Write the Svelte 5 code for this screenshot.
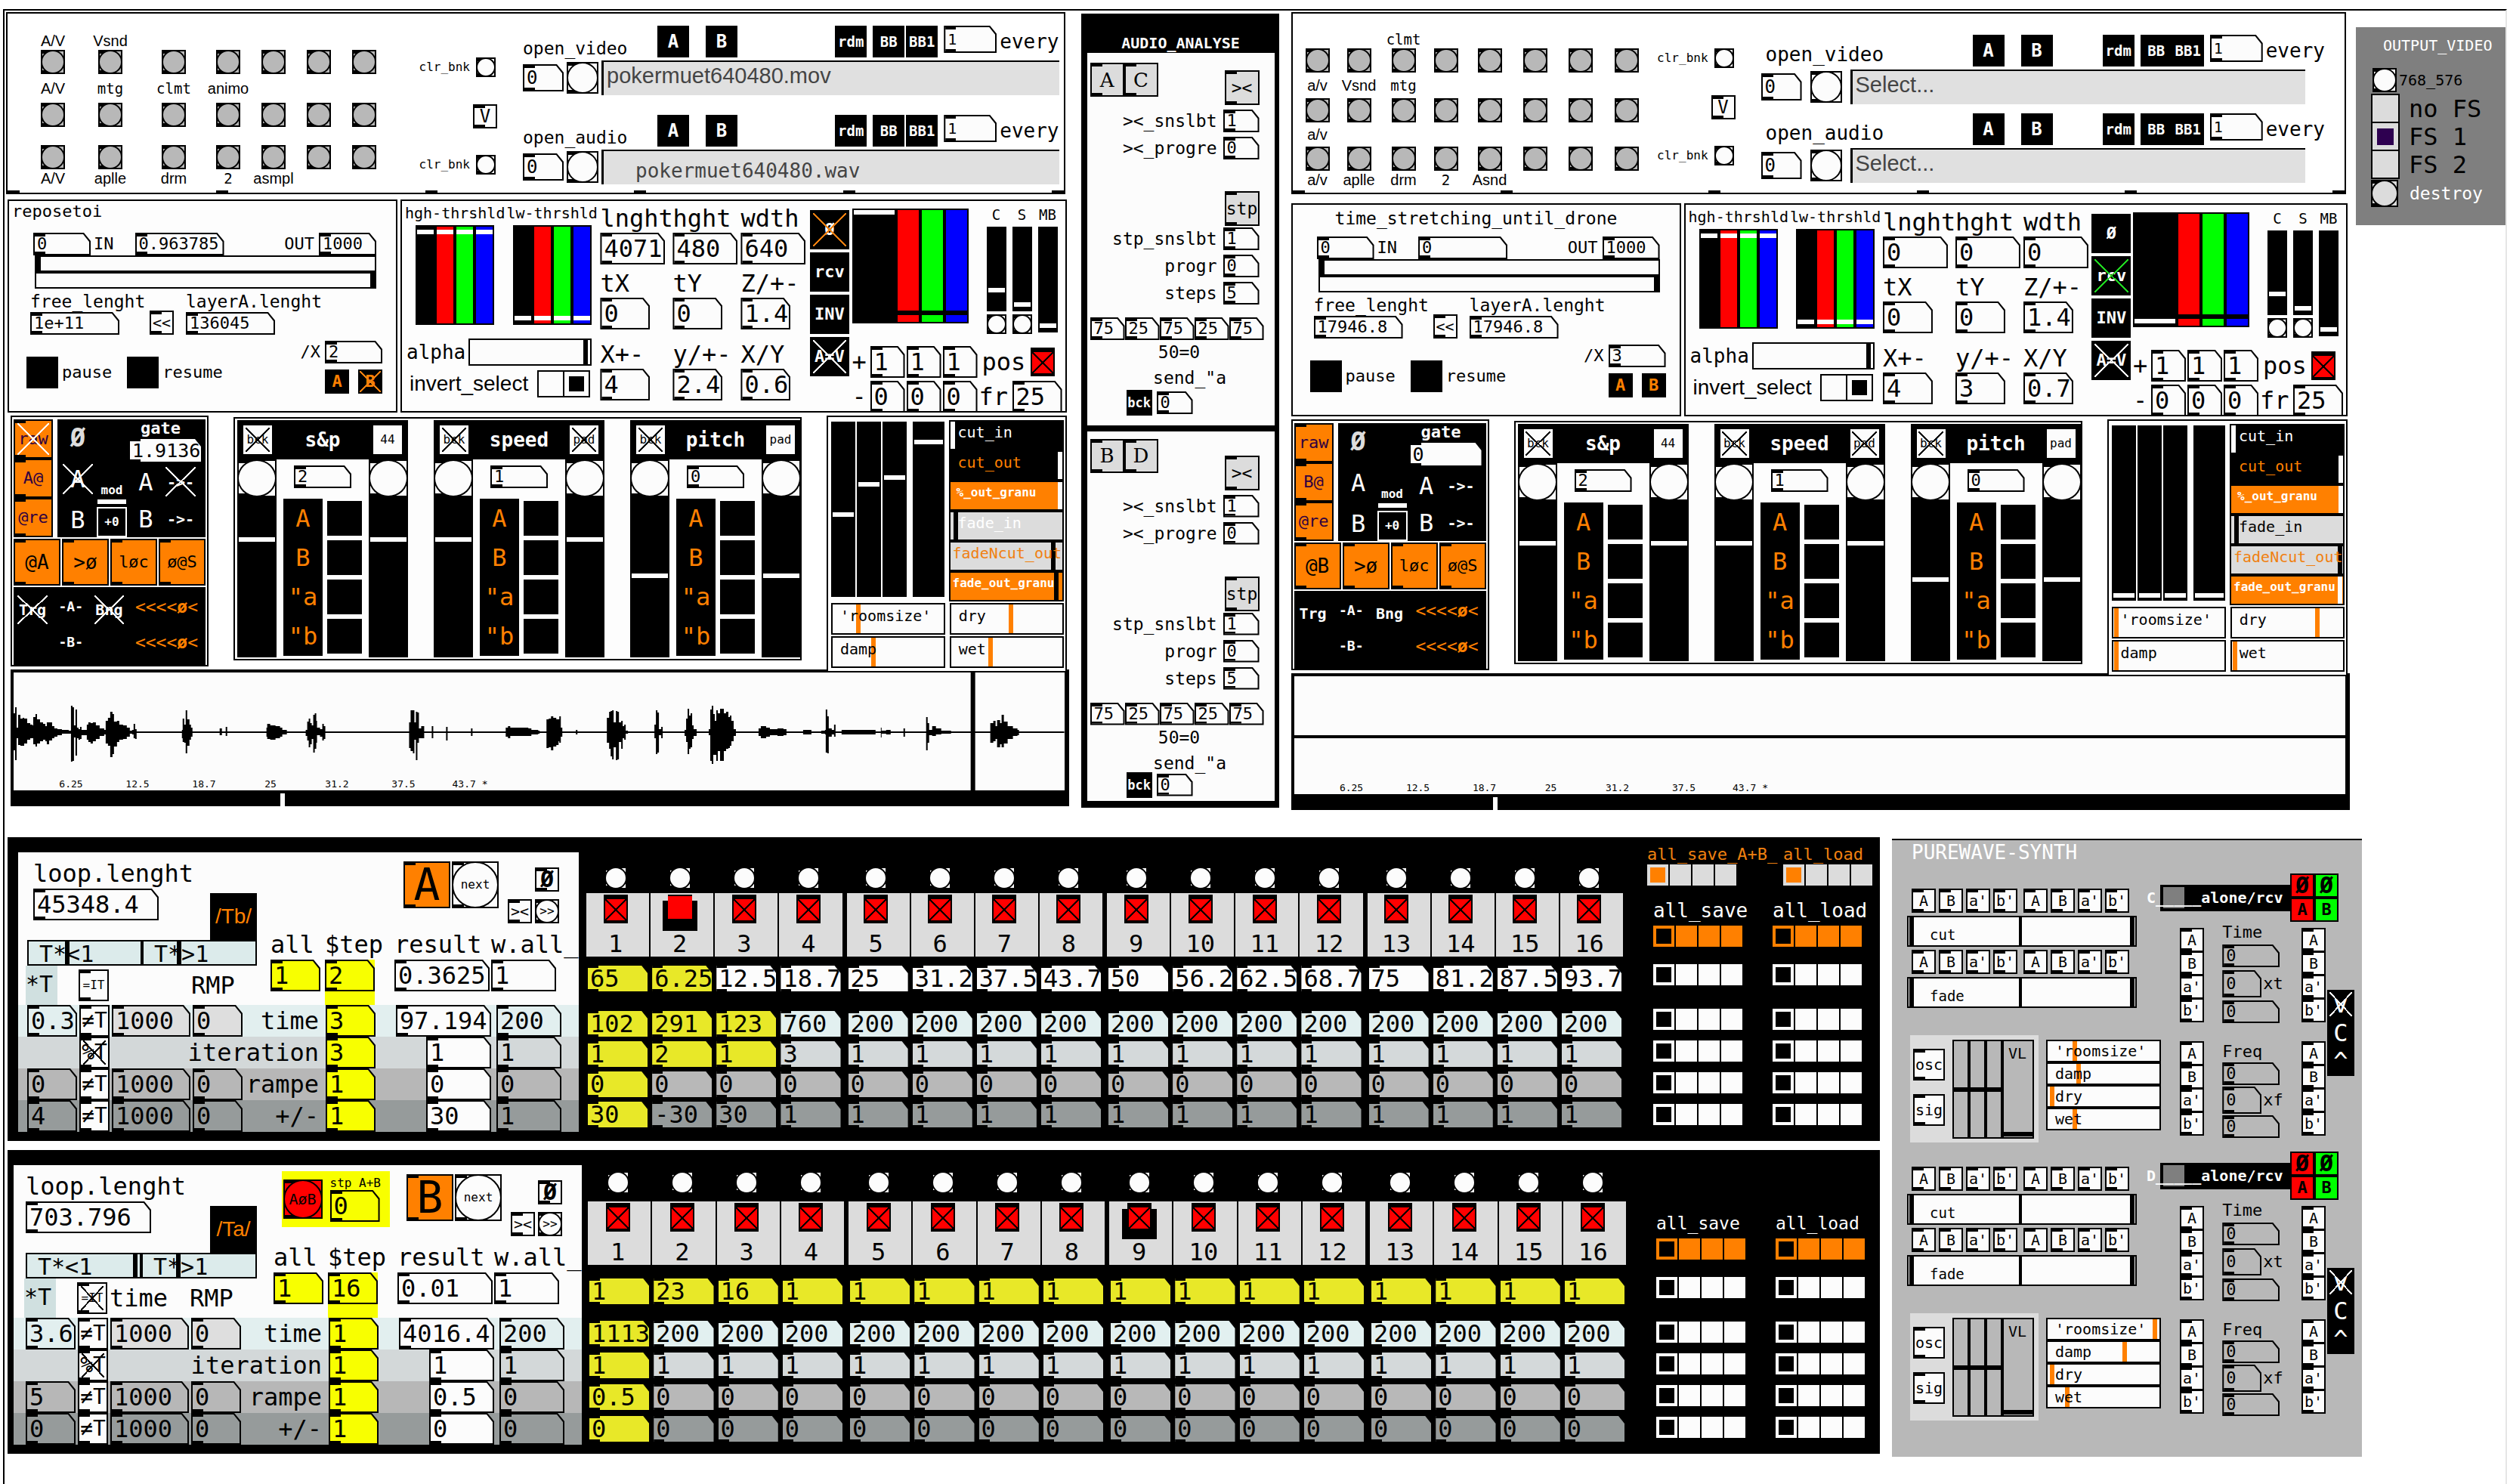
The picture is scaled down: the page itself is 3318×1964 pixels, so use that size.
<script>
  const mono = new Set(['mtg', 'clmt', '2']);
  const rgb = ['black', 'red', 'green', 'blue'];

  const decks = [
    {
      id: 'l',
      side: 'left',
      cells: [
        ['t', ['A/V', 'Vsnd', '', '', '', '', '']],
        ['b', 7],
        ['t', ['A/V', 'mtg', 'clmt', 'animo', '', '', '']],
        ['b', 7],
        ['t', ['', '', '', '', '', '', '']],
        ['b', 7],
        ['t', ['A/V', 'aplle', 'drm', '2', 'asmpl', '', '']]
      ],
      files: [
        { kind: 'open_video', name: 'pokermuet640480.mov', wav: false },
        { kind: 'open_audio', name: 'pokermuet640480.wav', wav: true }
      ],
      title: 'reposetoi',
      pos: '0.963785',
      free: '1e+11',
      layer: '136045',
      div: '2',
      bOff: true,
      nums: [
        [['lnght', '4071'], ['hght', '480'], ['wdth', '640']],
        [['tX', '0'], ['tY', '0'], ['Z/+-', '1.4']],
        [['X+-', '4'], ['y/+-', '2.4'], ['X/Y', '0.6']]
      ],
      modes: [['Ø', 'orange'], ['rcv', ''], ['INV', ''], ['A=V', 'white']],
      level: 100,
      orange: [['raw', true], ['A@', false], ['@re', false]],
      at: '@A',
      gate: '1.9136',
      crossed: true,
      faders: [47, 65, 69, 90],
      fadeIn: 'light',
      outs: [94, 97],
      verb: [['\'roomsize\'', 22], ['dry', 54], ['damp', 36], ['wet', 35]],
      play: 25.5
    },
    {
      id: 'r',
      side: 'right',
      cells: [
        ['t', ['', '', 'clmt', '', '', '', '', '']],
        ['b', 8],
        ['t', ['a/v', 'Vsnd', 'mtg', '', '', '', '', '']],
        ['b', 8],
        ['t', ['a/v', '', '', '', '', '', '', '']],
        ['b', 8],
        ['t', ['a/v', 'aplle', 'drm', '2', 'Asnd', '', '', '']]
      ],
      files: [
        { kind: 'open_video', name: 'Select...', wav: false },
        { kind: 'open_audio', name: 'Select...', wav: false }
      ],
      title: 'time_stretching_until_drone',
      pos: '0',
      free: '17946.8',
      layer: '17946.8',
      div: '3',
      bOff: false,
      nums: [
        [['lnght', '0'], ['hght', '0'], ['wdth', '0']],
        [['tX', '0'], ['tY', '0'], ['Z/+-', '1.4']],
        [['X+-', '4'], ['y/+-', '3'], ['X/Y', '0.7']]
      ],
      modes: [['Ø', ''], ['rcv', 'green'], ['INV', ''], ['A=V', 'white']],
      level: 2,
      orange: [['raw', false], ['B@', false], ['@re', false]],
      at: '@B',
      gate: '0',
      crossed: false,
      faders: [1, 1, 1, 1],
      fadeIn: 'dark',
      outs: [99, 99],
      verb: [['\'roomsize\'', 1], ['dry', 78], ['damp', 1], ['wet', 1]],
      play: 19
    }
  ];

  const voices = [
    { name: 's&p', v: '2', right: '44', rx: false, at: 75 },
    { name: 'speed', v: '1', right: 'pad', rx: true, at: 75 },
    { name: 'pitch', v: '0', right: 'pad', rx: false, at: 51 }
  ];
  const marks = ['6.25', '12.5', '18.7', '25', '31.2', '37.5', '43.7 *'];

  // x, height above the axis, height below the axis
  const wave = [[18,25,24],[20,33,37],[22,6,8],[24,23,17],[27,18,18],[30,19,18],[32,18,15],[36,12,10],[40,10,8],[43,9,8],[44,20,16],[47,24,19],[49,17,15],[53,13,12],[57,11,10],[60,8,12],[62,13,16],[65,13,11],[69,8,8],[72,5,6],[76,4,4],[82,3,2],[91,2,2],[94,35,39],[96,33,38],[98,9,7],[100,30,31],[102,6,8],[104,4,10],[106,7,9],[108,3,4],[112,3,4],[115,10,10],[117,13,13],[120,12,15],[123,13,12],[127,9,9],[132,5,5],[138,3,3],[140,15,15],[143,19,18],[146,27,33],[149,24,29],[151,14,19],[155,15,13],[158,10,10],[163,9,9],[168,6,6],[172,2,2],[175,3,3],[177,11,8],[179,4,9],[181,1,1],[240,1,1],[241,3,8],[242,18,13],[244,10,14],[246,29,28],[248,17,18],[251,10,10],[253,6,6],[255,1,1],[290,1,1],[291,5,4],[294,1,1],[298,1,1],[299,7,5],[301,1,1],[352,1,1],[353,6,6],[354,11,9],[358,9,10],[365,8,8],[371,6,6],[374,3,3],[380,1,1],[404,1,1],[405,3,5],[407,14,11],[409,18,20],[411,12,16],[413,9,9],[415,23,27],[417,25,22],[419,15,14],[420,6,4],[424,4,6],[427,11,11],[429,8,9],[431,1,1],[540,1,1],[542,13,21],[544,29,25],[547,29,28],[549,13,10],[551,27,37],[553,26,14],[555,5,8],[558,8,8],[562,1,1],[571,1,1],[572,8,8],[574,1,1],[589,1,1],[591,7,11],[593,1,1],[623,1,1],[624,5,5],[626,1,1],[669,1,1],[670,6,6],[673,8,8],[676,6,5],[690,6,5],[700,5,5],[704,3,3],[713,2,2],[715,1,1],[723,1,1],[724,17,21],[727,18,20],[730,21,24],[733,19,19],[737,17,17],[740,17,12],[741,21,14],[743,6,6],[745,1,1],[762,1,1],[763,3,3],[765,1,1],[803,1,1],[804,19,14],[807,27,22],[809,28,32],[811,29,36],[813,13,20],[816,28,37],[818,27,36],[820,13,13],[823,15,22],[825,8,8],[827,10,10],[829,2,2],[832,1,1],[866,1,1],[867,10,8],[869,29,29],[871,26,27],[873,4,4],[876,7,8],[878,1,1],[906,1,1],[907,3,5],[909,18,13],[911,31,29],[913,22,22],[915,25,20],[917,9,9],[919,4,5],[923,1,1],[938,1,1],[939,4,4],[941,30,38],[943,35,42],[945,24,30],[947,15,30],[949,29,38],[951,25,25],[954,31,38],[957,31,38],[959,25,25],[962,27,22],[965,20,21],[967,22,18],[969,15,12],[972,4,5],[975,1,1],[1002,1,1],[1005,5,5],[1008,8,8],[1015,6,6],[1020,4,4],[1030,5,5],[1038,4,4],[1042,1,1],[1060,1,1],[1064,3,3],[1070,3,3],[1075,1,1],[1088,2,2],[1093,3,3],[1094,30,27],[1096,21,28],[1098,5,6],[1102,3,3],[1105,10,6],[1107,1,1],[1115,3,3],[1130,3,3],[1155,3,3],[1160,1,1],[1167,6,7],[1168,2,2],[1174,3,3],[1180,1,1],[1196,1,1],[1197,5,6],[1199,1,1],[1225,1,1],[1227,20,24],[1229,12,14],[1231,3,4],[1235,8,5],[1240,5,3],[1247,2,2],[1260,1,1],[1311,1,1],[1312,12,14],[1316,15,12],[1319,8,9],[1321,16,20],[1325,12,16],[1327,23,20],[1330,14,15],[1335,8,9],[1342,5,5],[1348,3,4],[1350,1,1],[1408,1,1]];
  const steps = (side) =>
    wave.slice(0, -1).flatMap((w, i) => [
      [w[0] - 18, 79 + side * w[side < 0 ? 1 : 2]],
      [wave[i + 1][0] - 18, 79 + side * w[side < 0 ? 1 : 2]]
    ]);
  const wavePoints = [...steps(-1), ...steps(1).reverse()].map((p) => p.join(',')).join(' ');

  const analysis = [
    { id: 'a', pair: ['A', 'C'] },
    { id: 'b', pair: ['B', 'D'] }
  ];

  const fill = (head, v) => [...head, ...Array(16 - head.length).fill(v)];
  const seqs = [
    {
      id: 'A',
      len: '45348.4',
      tag: '/Tb/',
      t: [34, 31],
      itOff: false,
      step: '2',
      result: '0.3625',
      rows: [
        ['time', '0.3', '≠T', '1000', '0', '3', '97.194', '200'],
        ['iteration', '', '%T', '', '', '3', '1', '1'],
        ['rampe', '0', '≠T', '1000', '0', '1', '0', '0'],
        ['+/-', '4', '≠T', '1000', '0', '1', '30', '1']
      ],
      pressed: 2,
      steps: [
        ['65', '6.25', '12.5', '18.7', '25', '31.2', '37.5', '43.7', '50', '56.2', '62.5', '68.7', '75', '81.2', '87.5', '93.7'],
        fill(['102', '291', '123', '760'], '200'),
        fill(['1', '2', '1', '3'], '1'),
        fill([], '0'),
        fill(['30', '-30', '30'], '1')
      ],
      lit: [2, 3, 3, 1, 1]
    },
    {
      id: 'B',
      len: '703.796',
      tag: '/Ta/',
      t: [98, 31],
      itOff: true,
      step: '16',
      result: '0.01',
      rows: [
        ['time', '3.6', '≠T', '1000', '0', '1', '4016.4', '200'],
        ['iteration', '', '%T', '', '', '1', '1', '1'],
        ['rampe', '5', '≠T', '1000', '0', '1', '0.5', '0'],
        ['+/-', '0', '≠T', '1000', '0', '1', '0', '0']
      ],
      pressed: 9,
      steps: [
        fill(['1', '23', '16'], '1'),
        fill(['1113'], '200'),
        fill([], '1'),
        fill(['0.5'], '0'),
        fill([], '0')
      ],
      lit: [16, 1, 1, 1, 1]
    }
  ];
  const rowNames = ['position', 'time', 'iteration', 'rampe', 'sign'];

  const units = [
    { id: 'C', verb: [['\'roomsize\'', 23], ['damp', 27], ['dry', 2], ['wet', 23]] },
    { id: 'D', verb: [['\'roomsize\'', 98], ['damp', 70], ['dry', 2], ['wet', 16]] }
  ];
  const keys = ['A', 'B', "a'", "b'"];
</script>

{#snippet num(v, cls, name)}
  <span class="num {cls}"><input value={v} aria-label={name} /></span>
{/snippet}

{#snippet vs(v, cls, name)}
  <input class="vs {cls}" type="range" min="0" max="100" value={v} aria-label={name} />
{/snippet}

{#snippet hs(v, cls, name)}
  <input class="hs {cls}" type="range" min="0" max="100" step="any" value={v} aria-label={name} />
{/snippet}

{#snippet tog(text, cls)}
  <button class="tog {cls}"><span>{text}</span></button>
{/snippet}

{#snippet radios(name, cls)}
  <span class="rad {cls}" role="radiogroup" aria-label={name}>
    {#each [0, 1, 2, 3] as n}
      <input type="radio" {name} checked={n === 0} aria-label="{name} {n + 1}" />
    {/each}
  </span>
{/snippet}

{#snippet deck(d)}
  <section class="deck {d.side}">
    <div class="bank">
      <div class="pads">
        {#each d.cells as [type, items]}
          {#if type === 't'}
            {#each items as t}<span class="cap" class:mono={mono.has(t)}>{t}</span>{/each}
          {:else}
            {#each Array(items) as _, i}<button class="bang grey" aria-label="bank {i + 1}"></button>{/each}
          {/if}
        {/each}
      </div>
      <div class="clear">
        <label>clr_bnk <button class="bang tiny" aria-label="clear bank"></button></label>
        {@render tog('V', 'vbox')}
        <label>clr_bnk <button class="bang tiny" aria-label="clear bank"></button></label>
      </div>
      <div class="files">
        {#each d.files as f}
          <div class="file">
            <div class="filetop">
              <span class="kind">{f.kind}</span>
              <span class="ab">{@render tog('A', 'blk')}{@render tog('B', 'blk')}</span>
              <span class="rnd">
                {@render tog('rdm', 'blk small')}
                <span class="bbs">{@render tog('BB', 'blk small')}{@render tog('BB1', 'blk small')}</span>
                {@render num('1', 'n70 h36', f.kind + ' every')}
              </span>
              <span class="every">every</span>
            </div>
            <div class="filerow">
              {@render num('0', 'n54 h36', f.kind + ' index')}
              <button class="bang big" aria-label={f.kind}></button>
              <input class="path" class:wav={f.wav} value={f.name} aria-label={f.kind + ' file'} />
            </div>
          </div>
        {/each}
      </div>
    </div>

    <div class="row2">
      <div class="stretch box">
        <h2>{d.title}</h2>
        <div class="inout">
          {@render num('0', 'n76 h30', 'in')}<span class="in">IN</span>
          {@render num(d.pos, 'n118 h30', 'position')}<span class="out">OUT</span>
          {@render num('1000', 'n76 h30', 'out')}
        </div>
        <div class="range">
          {@render hs(0, 'k', 'range start')}
          {@render hs(100, 'k', 'range end')}
        </div>
        <div class="lens">
          <div><span>free_lenght</span>{@render num(d.free, 'n118 h30', 'free_lenght')}</div>
          {@render tog('<<', 'sq')}
          <div><span>layerA.lenght</span>{@render num(d.layer, 'n118 h30', 'layerA.lenght')}</div>
        </div>
        <div class="foot">
          <label class="lb"><button class="solid" aria-label="pause"></button>pause</label>
          <label class="lb"><button class="solid" aria-label="resume"></button>resume</label>
          <div class="divx">
            <label>/X {@render num(d.div, 'n76 h30', 'divide')}</label>
            <span>{@render tog('A', 'blk or')}{@render tog('B', d.bOff ? 'blk or x xo' : 'blk or')}</span>
          </div>
        </div>
      </div>

      <div class="color box">
        <div class="thr">
          <div class="thrtop">
            <div><span>hgh-thrshld</span><div class="quad">{#each rgb as c}{@render vs(97, 'w ' + c, 'high ' + c)}{/each}</div></div>
            <div><span>lw-thrshld</span><div class="quad">{#each rgb as c}{@render vs(3, 'w ' + c, 'low ' + c)}{/each}</div></div>
          </div>
          <label class="alpha">alpha{@render hs(98, 'k', 'alpha')}</label>
          <div class="inv">invert_select
            <span class="rad two"><input type="radio" name="inv-{d.id}" aria-label="invert off" /><input type="radio" name="inv-{d.id}" checked aria-label="invert on" /></span>
          </div>
        </div>
        <div class="geo">
          {#each d.nums as r, i}
            {#each r as [l, v]}
              <label><span>{l}</span>{@render num(v, i ? 'n66 h42' : 'n86 h42', l)}</label>
            {/each}
          {/each}
        </div>
        <div class="modes">
          {#each d.modes as [t, x]}{@render tog(t, 'mode' + (x ? ' x x' + x : ''))}{/each}
        </div>
        <div class="mix">
          <div class="mixtop">
            <div class="levels">
              {@render vs(d.level, 'w black wide', 'level')}
              {#each rgb.slice(1) as c}{@render vs(6, 'kk ' + c, 'level ' + c)}{/each}
            </div>
            <div class="csm">
              <div><span>C</span>{@render vs(23, 'w black', 'C')}<button class="bang tiny" aria-label="reset C"></button></div>
              <div><span>S</span>{@render vs(4, 'w black', 'S')}<button class="bang tiny" aria-label="reset S"></button></div>
              <div><span>MB</span>{@render vs(3, 'w black tall', 'MB')}</div>
            </div>
          </div>
          <div class="pn"><b>+</b>{#each [1, 2, 3] as n}{@render num('1', 'n46 h42', 'plus ' + n)}{/each}<em class="pos">pos</em><input class="rx" type="checkbox" checked aria-label="pos" /></div>
          <div class="pn"><b>-</b>{#each [1, 2, 3] as n}{@render num('0', 'n46 h42', 'minus ' + n)}{/each}<em class="fr">fr</em>{@render num('25', 'n66 h42', 'frame rate')}</div>
        </div>
      </div>
    </div>

    <div class="row3">
      <div class="gate box">
        <div class="g1">
          <div class="gcol">{#each d.orange as [t, x]}{@render tog(t, x ? 'og x xwhite' : 'og')}{/each}</div>
          <div class="gblk">
            <div class="gab">
              <b class="zero">Ø</b>
              {@render tog('A', d.crossed ? 'bare x xwhite' : 'bare')}
              {@render tog('B', 'bare')}
            </div>
            <div class="gmod"><span>mod</span><i></i>{@render tog('+0', 'plus')}</div>
            <div class="gright">
              <span class="gl">gate</span>
              {@render num(d.gate, 'n98 h34', 'gate')}
              <div>{@render tog('A', 'bare')}{@render tog('->-', d.crossed ? 'bare sm x xwhite' : 'bare sm')}</div>
              <div>{@render tog('B', 'bare')}{@render tog('->-', 'bare sm')}</div>
            </div>
          </div>
        </div>
        <div class="g2">
          {@render tog(d.at, 'om')}{@render tog('>ø', 'om')}{@render tog('løc', 'om s')}{@render tog('ø@S', 'om s')}
        </div>
        <div class="g3">
          {@render tog('Trg', d.crossed ? 'bare t x xwhite' : 'bare t')}
          <div><span>-A-</span><span>-B-</span></div>
          {@render tog('Bng', d.crossed ? 'bare t x xwhite' : 'bare t')}
          <div class="arrows"><span>&lt;&lt;&lt;&lt;<b>ø</b>&lt;</span><span>&lt;&lt;&lt;&lt;<b>ø</b>&lt;</span></div>
        </div>
      </div>

      <div class="voices box">
        {#each voices as v}
          <div class="voice">
            <header>{@render tog('bck', 'pad x')}<strong>{v.name}</strong>{@render tog(v.right, v.rx ? 'pad x' : 'pad')}</header>
            <div class="vbody">
              <div class="side"><button class="bang" aria-label="{v.name} left"></button>{@render vs(v.at, 'w black', v.name + ' left')}</div>
              <div class="mid">
                {@render num(v.v, 'n76 h30', v.name)}
                <div class="layers">
                  <div class="names">{#each ['A', 'B', '"a', '"b'] as n}<button>{n}</button>{/each}</div>
                  <div class="sqs">{#each [1, 2, 3, 4] as n}<button aria-label="{v.name} layer {n}"></button>{/each}</div>
                </div>
              </div>
              <div class="side"><button class="bang" aria-label="{v.name} right"></button>{@render vs(v.at, 'w black', v.name + ' right')}</div>
            </div>
          </div>
        {/each}
      </div>

      <div class="fx box">
        <div class="fxtop">
          <div class="strips">{#each d.faders as f, i}{@render vs(f, 'w black', 'strip ' + (i + 1))}{/each}</div>
          <div class="cuts">
            <label class="c1"><span>cut_in</span>{@render hs(0, 'w', 'cut_in')}</label>
            <label class="c2"><span>cut_out</span>{@render hs(100, 'w', 'cut_out')}</label>
            <label class="c3"><span>%_out_granu</span>{@render hs(100, 'w', '%_out_granu')}</label>
            <label class="c4 {d.fadeIn}"><span>fade_in</span>{@render hs(3, 'k', 'fade_in')}</label>
            <label class="c5"><span>fadeNcut_out</span>{@render hs(d.outs[0], 'k', 'fadeNcut_out')}</label>
            <label class="c6"><span>fade_out_granu</span>{@render hs(d.outs[1], d.crossed ? 'k' : 'w', 'fade_out_granu')}</label>
          </div>
        </div>
        <div class="verb">
          {#each d.verb as [l, v]}<label class="vb"><span>{l}</span>{@render hs(v, 'o', l)}</label>{/each}
        </div>
      </div>
    </div>

    <div class="wave">
      <div class="scope">
        <svg viewBox="0 0 1392 156" preserveAspectRatio="none" aria-hidden="true">
          {#if d.side === 'left'}
            <polygon points={wavePoints} />
            <rect x="0" y="78" width="1392" height="2" />
            <rect x="1268" y="0" width="6" height="156" />
          {:else}
            <rect x="0" y="78" width="1392" height="4" />
          {/if}
        </svg>
        <div class="marks">{#each marks as m}<span>{m}</span>{/each}</div>
      </div>
      {@render hs(d.play, 'w', 'play position')}
    </div>
  </section>
{/snippet}

<main>
  <div class="top">
    {@render deck(decks[0])}

    <section class="analyse">
      <h2>AUDIO_ANALYSE</h2>
      {#each analysis as a}
        <div class="an {a.id}">
          <div class="an1"><span>{#each a.pair as p}{@render tog(p, 'ser')}{/each}</span>{@render tog('><', 'gb')}</div>
          <label>&gt;&lt;_snslbt {@render num('1', 'n48 h30', 'snslbt')}</label>
          <label>&gt;&lt;_progre {@render num('0', 'n48 h30', 'progre')}</label>
          <div class="an2">{@render tog('stp', 'gb')}</div>
          <label>stp_snslbt {@render num('1', 'n48 h30', 'stp_snslbt')}</label>
          <label>progr {@render num('0', 'n48 h30', 'progr')}</label>
          <label>steps {@render num('5', 'n48 h30', 'steps')}</label>
          <div class="five">{#each [75, 25, 75, 25, 75] as v, i}{@render num(v, 'n46 h30', 'level ' + (i + 1))}{/each}</div>
          <p>50=0</p>
          <p class="send">send_"a</p>
          <div class="bck">{@render tog('bck', 'blk mini')}{@render num('0', 'n48 h30', 'send')}</div>
        </div>
      {/each}
    </section>

    <div class="rightside">
      {@render deck(decks[1])}
      <aside>
        <h2>OUTPUT_VIDEO</h2>
        <label class="size"><button class="bang" aria-label="768_576"></button>768_576</label>
        <div class="fs">
          {#each ['no FS', 'FS 1', 'FS 2'] as f, i}
            <label><input type="radio" name="fs" checked={i === 1} />{f}</label>
          {/each}
        </div>
        <label class="destroy"><button class="bang" aria-label="destroy"></button>destroy</label>
      </aside>
    </div>
  </div>

  <div class="bottom">
    <div class="seqs">
      {#each seqs as s}
        <section class="seq s{s.id}">
          <div class="ctl">
            <div class="ctop">
              <div class="cl">
                <div class="lenrow">
                  <label><span>loop.lenght</span>{@render num(s.len, 'n166 h42', 'loop.lenght')}</label>
                  <button class="tag">{s.tag}</button>
                </div>
                <div class="ts">
                  <label><span>T*&lt;1</span>{@render hs(s.t[0], 'k', 'T*<1')}</label>
                  <label><span>T*&gt;1</span>{@render hs(s.t[1], 'k', 'T*>1')}</label>
                </div>
                <div class="heads">
                  <span class="star">*T</span>
                  {@render tog('=IT', s.itOff ? 'it x' : 'it')}
                  <span>{s.id === 'B' ? 'time' : ''}</span>
                  <span>RMP</span>
                </div>
              </div>
              <div class="cr">
                <div class="acts">
                  {#if s.id === 'B'}
                    <div class="stp"><button class="bang red"><span>AøB</span></button><label><span class="sl">stp A+B</span>{@render num('0', 'n66 h42 yel', 'stp A+B')}</label></div>
                  {/if}
                  <button class="letter">{s.id}</button>
                  <button class="bang next"><span>next</span></button>
                  <div class="nav">
                    {@render tog('Ø', 'nz')}
                    <span>{@render tog('><', 'nx')}<button class="bang nb"><span>&gt;&gt;</span></button></span>
                  </div>
                </div>
                <div class="cg">
                  <span>all</span><span>$tep</span><span>result</span><span>w.all_</span>
                  <span class="yb">{@render num('1', 'n66 h42 yel', 'all')}</span>
                  <span class="yb full">{@render num(s.step, 'n66 h42 yel', '$tep')}</span>
                  {@render num(s.result, 'n126 h42', 'result')}
                  {@render num('1', 'n86 h42', 'w.all')}
                </div>
              </div>
            </div>
            {#each s.rows as r, i}
              <div class="cline l{i}">
                {#if r[1]}{@render num(r[1], 'n66 h42 own', r[0] + ' factor')}{:else}<span></span>{/if}
                {@render tog(r[2], i === 1 ? 'ne x' : 'ne')}
                {#if r[3]}{@render num(r[3], 'n104 h42 gry', r[0] + ' ms')}{@render num(r[4], 'n66 h42 gry', r[0] + ' ramp')}{:else}<span></span><span></span>{/if}
                <span class="rn">{r[0]}</span>
                {@render num(r[5], 'n66 h42 yel', r[0] + ' $tep')}
                <span class="end">{@render num(r[6], i ? 'n86 h42' : 'n126 h42', r[0] + ' result')}</span>
                <span class="end">{@render num(r[7], 'n86 h42 own', r[0] + ' w.all')}</span>
              </div>
            {/each}
          </div>

          <div class="steps">
            {#each [0, 4, 8, 12] as g}
              <div class="grp">
                {#each [0, 1, 2, 3].map((k) => g + k) as n}
                  <div class="step">
                    <button class="bang sb" aria-label="go to step {n + 1}"></button>
                    <label class="sh"><span class="tw" class:pressed={s.pressed === n + 1}><input class="rx" class:flat={n === 1 && s.pressed === 2} type="checkbox" checked aria-label="step {n + 1}" /></span>{n + 1}</label>
                    {#each s.steps as row, r}
                      {@render num(row[n], 'cell r' + r + (n < s.lit[r] ? ' lit' : ''), rowNames[r] + ' ' + (n + 1))}
                    {/each}
                  </div>
                {/each}
              </div>
            {/each}
          </div>

          <div class="presets">
            {#if s.id === 'A'}
              <div class="ptop">
                <div><span>all_save_A+B_</span>{@render radios('all_save_A+B', 'lt')}</div>
                <div><span>all_load</span>{@render radios('all_load_A+B', 'lt')}</div>
              </div>
            {/if}
            <div class="pcols">
              {#each ['all_save', 'all_load'] as p}
                <div class="pcol">
                  <h3>{p}</h3>
                  {@render radios(p + '_' + s.id, 'or')}
                  {#each rowNames as r}{@render radios(p + '_' + s.id + '_' + r, 'wh')}{/each}
                </div>
              {/each}
            </div>
          </div>
        </section>
      {/each}
    </div>

    <section class="synth">
      <h2>PUREWAVE-SYNTH</h2>
      {#each units as u}
        <div class="unit">
          <div class="uc">
            {#each ['cut', 'fade'] as c}
              <div class="keys">
                {#each [0, 1] as h}<span>{#each keys as k}{@render tog(k, 'key')}{/each}</span>{/each}
              </div>
              <div class="cf {c}">
                <label><span>{c}</span>{@render hs(1, 'k', c + ' in')}</label>
                {@render hs(99, 'k', c + ' out')}
              </div>
            {/each}
          </div>
          <div class="alone">
            <span>{u.id}</span>
            <div><i></i><b>_____alone/rcv</b></div>
            <span class="rg">{@render tog('Ø', 'r z')}{@render tog('Ø', 'g z')}{@render tog('A', 'r')}{@render tog('B', 'g')}</span>
          </div>
          {#each [['Time', 'xt'], ['Freq', 'xf']] as [t, x]}
            <div class="tf {t}">
              <div class="kc">{#each keys as k}{@render tog(k, 'key')}{/each}</div>
              <div class="tn">
                <span>{t}</span>
                {@render num('0', 'n76 h30 gr', t)}
                <label>{@render num('0', 'n52 h36 gr', x)}{x}</label>
                {@render num('0', 'n76 h30 gr', t + ' fine')}
              </div>
              <div class="kc">{#each keys as k}{@render tog(k, 'key')}{/each}</div>
            </div>
          {/each}
          <div class="osc">
            <div class="oscbox">
              <div class="obs">{@render tog('osc', 'ob')}{@render tog('sig', 'ob')}</div>
              <div class="ofad">
                {#each [1, 2, 3] as n}{@render vs(50, 'k2', 'osc ' + n)}{/each}
                <label><span>VL</span>{@render vs(1, 'k2', 'VL')}</label>
              </div>
            </div>
            <div class="verb4">{#each u.verb as [l, v]}<label class="vb"><span>{l}</span>{@render hs(v, 'o', l)}</label>{/each}</div>
          </div>
          <div class="vc">{@render tog('v', 'bare x xwhite')}{@render tog('C', 'bare')}{@render tog('^', 'bare')}</div>
        </div>
      {/each}
    </section>
  </div>
</main>

<style>
  :global(body) { background: #fff; }
  main {
    --tick: linear-gradient(#000, #000) 0 0 / 14px 3px no-repeat, linear-gradient(#000, #000) 0 100% / 14px 3px no-repeat;
    font: 20px/24px "DejaVu Sans Mono", monospace;
    color: #000;
    margin: 12px 0 0 4px;
    min-height: calc(100vh - 12px);
    box-sizing: border-box;
    border-left: 2px solid #000;
    border-top: 2px solid #000;
    border-right: 2px solid #e6e6e6;
    padding: 2px 0 0 2px;
    white-space: nowrap;
  }
  main * { box-sizing: border-box; }
  h2, h3, p { margin: 0; font-size: inherit; font-weight: inherit; }
  em, strong { font-style: normal; font-weight: normal; }
  button, input { font: inherit; color: inherit; border-radius: 0; margin: 0; min-width: 0; }
  button { padding: 0; }
  .box { border: 2px solid #000; background: #fdfdfd; }

  /* number box */
  .num {
    display: inline-flex;
    flex: none;
    background: #000;
    padding: 2px;
    clip-path: polygon(0 0, calc(100% - 9px) 0, 100% 11px, 100% 100%, 0 100%);
  }
  .num input {
    width: 100%;
    border: 0;
    padding: 0 0 0 3px;
    background: var(--tick), var(--bg, #fcfcfc);
    clip-path: polygon(0 0, calc(100% - 8px) 0, 100% 10px, 100% 100%, 0 100%);
  }
  .n46 { width: 46px; } .n48 { width: 48px; } .n52 { width: 52px; } .n54 { width: 54px; }
  .n66 { width: 66px; } .n70 { width: 70px; } .n76 { width: 76px; } .n86 { width: 86px; }
  .n98 { width: 98px; } .n104 { width: 104px; } .n118 { width: 118px; } .n126 { width: 126px; } .n166 { width: 166px; }
  .h30 { height: 30px; font-size: 22px; } .h34 { height: 34px; } .h36 { height: 36px; } .h42 { height: 42px; }
  .yel { --bg: #f8ff00; }
  .gr { --bg: #b8b8b8; }

  /* bang */
  .bang {
    width: 32px;
    height: 32px;
    flex: none;
    border: 2px solid #000;
    background: var(--tick), var(--bb, #fcfcfc);
    display: grid;
    place-items: center;
  }
  .bang::before { content: ''; grid-area: 1 / 1; width: 100%; height: 100%; border: 2px solid #000; border-radius: 50%; background: var(--bb, #fcfcfc); }
  .bang span { grid-area: 1 / 1; }
  .grey { --bb: #b8b8b8; }
  .bang.tiny { width: 26px; height: 26px; }
  .bang.big { width: 42px; height: 42px; }

  /* labelled toggle */
  .tog { display: grid; place-items: center; flex: none; border: 2px solid #000; background: var(--tick), #fcfcfc; }
  .tog span { grid-area: 1 / 1; }
  .x { --xc: #000; }
  .x::after {
    content: '';
    grid-area: 1 / 1;
    width: 86%;
    height: 86%;
    background:
      linear-gradient(to top right, transparent calc(50% - 1px), var(--xc) calc(50% - 1px) calc(50% + 1px), transparent calc(50% + 1px)),
      linear-gradient(to bottom right, transparent calc(50% - 1px), var(--xc) calc(50% - 1px) calc(50% + 1px), transparent calc(50% + 1px));
  }
  .xorange, .xo { --xc: #f08010; }
  .xwhite { --xc: #fff; }
  .xgreen { --xc: #20d820; }
  .blk { width: 42px; height: 42px; border: 0; background: #000; color: #fff; font-weight: bold; font-size: 24px; }
  .blk.small { font-size: 19px; }
  .blk.or { width: 32px; height: 32px; color: #ff8000; font-size: 22px; }
  .blk.mini { width: 34px; height: 34px; font-size: 17px; }
  .sq { width: 32px; height: 32px; }

  /* sliders */
  .vs, .hs { appearance: none; display: block; padding: 0; background: var(--tr, #fcfcfc); border: 2px solid #000; --th: #000; }
  .vs { writing-mode: vertical-lr; direction: rtl; width: 26px; height: 100%; }
  .hs { width: 100%; height: 100%; }
  .vs::-webkit-slider-runnable-track, .hs::-webkit-slider-runnable-track { width: 100%; height: 100%; }
  .vs::-webkit-slider-thumb { appearance: none; width: 100%; height: 6px; background: var(--th); border: 0; }
  .hs::-webkit-slider-thumb { appearance: none; width: 6px; height: 100%; background: var(--th); border: 0; }
  .w { --th: #fdfdfd; }
  .k, .kk, .k2 { --th: #000; }
  .o { --th: #ff8000; }
  .black { --tr: #000; } .red { --tr: #f00; } .green { --tr: #0f0; } .blue { --tr: #00f; }

  /* radio strips */
  .rad { display: flex; }
  .rad input { appearance: none; width: 28px; height: 28px; background: var(--c); }
  .rad.lt { --c: #dcdcdc; --m: #ff8000; gap: 2px; }
  .rad.or { --c: #ff8000; --m: #000; gap: 2px; }
  .rad.wh { --c: #fcfcfc; --m: #000; gap: 2px; }
  .rad input:checked { background: linear-gradient(var(--m), var(--m)) center / 20px 20px no-repeat, var(--c); }
  .rad.two { --c: #fcfcfc; --m: #000; width: 70px; border: 2px solid #000; background: #000; gap: 2px; height: 36px; }
  .rad.two input { flex: 1; height: 32px; }

  .top { display: grid; grid-template-columns: minmax(0, 1407fr) 262px minmax(0, 1608fr); gap: 16px; }
  .rightside { display: flex; gap: 8px; }
  .deck { flex: 1; min-width: 0; }

  /* banks */
  .bank {
    display: flex;
    margin-right: 5px;
    height: 241px;
    border: 2px solid #000;
    padding-right: 6px;
    background: repeating-linear-gradient(90deg, #000 0 16px, transparent 16px calc((100% - 16px) / 5)) 0 100% / 100% 3px no-repeat, #fff;
  }
  .pads {
    display: grid;
    grid-template: 24px 32px 38px 32px 24px 32px 24px / 80px 72px 96px 48px 72px 48px 72px;
    padding: 24px 0 0 20px;
    justify-items: center;
    align-items: center;
  }
  .right .pads { grid-template: 24px 32px 34px 32px 32px 32px 24px / 54px 56px 62px 50px 66px 54px 66px 56px; padding: 22px 0 0 6px; }
  .cap { font: 20px/24px "Liberation Sans", sans-serif; }
  .cap.mono { font: 19px/24px "DejaVu Sans Mono", monospace; }
  .clear { width: 108px; margin-left: 32px; padding: 58px 0 24px; display: flex; flex-direction: column; justify-content: space-between; align-items: flex-end; font-size: 16px; }
  .right .clear { margin-left: 8px; padding: 46px 0 36px; }
  .clear label { display: flex; align-items: center; gap: 8px; padding-right: 2px; }
  .vbox { width: 32px; height: 32px; font-size: 24px; }
  .files { flex: 1; margin-left: 34px; padding-top: 16px; display: flex; flex-direction: column; gap: 26px; }
  .right .files { padding: 28px 46px 0 0; gap: 12px; }
  .filetop { display: flex; height: 46px; align-items: flex-start; }
  .kind { font-size: 23px; width: 178px; padding-top: 18px; }
  .right .kind { font-size: 26px; width: 280px; padding-left: 6px; padding-top: 14px; }
  .ab { display: flex; gap: 22px; margin-right: auto; }
  .rnd { display: flex; gap: 8px; }
  .bbs { display: flex; gap: 2px; }
  .right .bbs { gap: 0; }
  .every { font-size: 26px; line-height: 42px; padding-left: 4px; }
  .right .filetop { margin-right: -26px; }
  .filerow { display: flex; align-items: center; gap: 4px; height: 46px; font-size: 24px; }
  .right .filerow { gap: 11px; }
  .path { flex: 1; align-self: stretch; border: 0; border-left: 3px solid #000; border-top: 2px solid #000; background: #e0e0e0; color: #444; font: 29px/36px "Liberation Sans", sans-serif; padding: 0 0 8px 4px; }
  .path.wav { font: 26px/36px "DejaVu Sans Mono", monospace; padding: 8px 0 0 42px; }

  /* stretch and colour */
  .row2 { display: flex; gap: 4px; margin: 7px 3px 0 2px; height: 282px; }
  .right .row2 { margin: 12px 3px 0 0; }
  .stretch { width: 516px; padding: 0 18px 0 26px; font-size: 22px; line-height: 24px; }
  .stretch h2 { margin-left: -22px; padding: 2px 0 4px; font-size: 22px; }
  .right .stretch h2 { margin-left: 30px; padding: 6px 0 0; font-size: 23px; }
  .inout { display: flex; align-items: center; padding: 12px 8px 0 6px; }
  .in { margin: 0 28px 0 4px; }
  .out { margin: 0 6px 0 auto; }
  .range { display: grid; grid-auto-rows: 22px; padding: 0 8px; }
  .lens { display: flex; align-items: flex-end; padding: 5px 0 0 2px; font-size: 23px; }
  .lens .tog { font-size: 20px; margin: 0 16px 0 40px; }
  .lens div { width: 118px; display: flex; flex-direction: column; gap: 2px; }
  .foot { display: flex; align-items: center; margin-left: -3px; }
  .lb { display: flex; align-items: center; gap: 5px; padding-top: 22px; margin-right: 20px; }
  .solid { width: 42px; height: 42px; background: #000; border: 0; }
  .divx { margin-left: auto; padding-top: 8px; }
  .divx label { display: flex; align-items: center; justify-content: flex-end; gap: 6px; }
  .divx > span { display: flex; justify-content: flex-end; gap: 12px; padding-top: 8px; }

  .color { flex: 1; display: flex; justify-content: space-between; padding: 4px 2px 0 4px; }
  .thrtop { display: flex; gap: 2px; line-height: 24px; }
  .thrtop > div { display: flex; flex-direction: column; align-items: center; gap: 4px; }
  .quad { display: flex; height: 132px; width: 104px; }
  .quad .vs { width: 25%; }
  .alpha { display: flex; align-items: center; gap: 4px; font-size: 26px; padding: 18px 8px 0 2px; }
  .alpha .hs { flex: 1; height: 36px; }
  .inv { display: flex; justify-content: space-between; align-items: center; font: 28px/36px "Liberation Sans", sans-serif; padding: 6px 10px 0 6px; }
  .geo { display: grid; grid-template: 80px 86px 94px / 96px 90px 88px; align-content: start; font-size: 32px; }
  .geo label { display: flex; flex-direction: column; justify-content: flex-end; line-height: 38px; }
  .geo label span { flex: none; }
  .modes { display: flex; flex-direction: column; gap: 4px; padding-top: 8px; }
  .mode { width: 52px; height: 52px; border: 0; background: #000; color: #fff; font: bold 22px/24px "DejaVu Sans Mono", monospace; }
  .mix { width: 280px; padding-top: 6px; }
  .mixtop { display: flex; justify-content: space-between; padding-right: 8px; height: 178px; }
  .levels { display: flex; height: 152px; }
  .levels .vs { width: 32px; }
  .levels .wide { width: 58px; }
  .csm { display: flex; gap: 8px; margin-top: -4px; }
  .csm div { display: flex; flex-direction: column; align-items: center; font-size: 19px; width: 26px; gap: 4px; }
  .csm .vs { height: 112px; flex: none; }
  .csm .tall { height: 140px; }
  .pn { display: flex; align-items: center; gap: 2px; font-size: 32px; padding-top: 4px; }
  .pn b { font-weight: normal; width: 22px; }
  .pos { width: 66px; padding-left: 4px; }
  .fr { width: 42px; }
  .rx {
    appearance: none;
    width: 32px;
    height: 38px;
    background:
      linear-gradient(to top right, transparent calc(50% - 1px), #000 calc(50% - 1px) calc(50% + 1px), transparent calc(50% + 1px)),
      linear-gradient(to bottom right, transparent calc(50% - 1px), #000 calc(50% - 1px) calc(50% + 1px), transparent calc(50% + 1px)),
      #f00;
    border: 2px solid #000;
    border-width: 6px 2px 4px;
  }

  /* gate */
  .row3 { display: grid; grid-template-columns: 262px 752px 1fr; gap: 33px; margin: 4px 3px 0 6px; height: 336px; align-items: start; }
  .right .row3 { margin-left: 0; }
  .gate { height: 332px; padding: 3px 2px 0; display: flex; flex-direction: column; gap: 2px; }
  .g1 { display: flex; gap: 6px; height: 156px; }
  .gcol { display: flex; flex-direction: column; }
  .og { width: 52px; height: 52px; background: var(--tick), #ff8000; color: #300040; font-size: 22px; }
  .gblk { flex: 1; background: #000; color: #fff; display: flex; justify-content: space-between; padding: 0 4px; }
  .bare { border: 0; background: none; color: #fff; font-size: 32px; height: 46px; width: 46px; line-height: 30px; }
  .bare.sm { font-size: 20px; font-weight: bold; }
  .gab { display: flex; flex-direction: column; justify-content: space-between; align-items: center; }
  .zero { font-size: 34px; line-height: 48px; color: #ddd; }
  .gmod { display: flex; flex-direction: column; justify-content: flex-end; align-items: center; font-size: 16px; font-weight: bold; }
  .gmod i { width: 38px; height: 6px; background: #fff; margin-bottom: 4px; }
  .plus { width: 40px; height: 40px; border-color: #fff; background: #000; color: #fff; font-size: 16px; }
  .gright { width: 98px; font-size: 22px; display: flex; flex-direction: column; }
  .gl { padding-left: 16px; font-weight: bold; }
  .gright .num { font-size: 25px; color: #000; }
  .gright div { display: flex; flex: 1; align-items: center; }
  .g2 { display: flex; gap: 2px; }
  .om { flex: 1; height: 62px; background: var(--tick), #ff8000; font-size: 26px; }
  .om.s { font-size: 22px; }
  .g3 { flex: 1; background: #000; color: #fff; font-weight: bold; font-size: 18px; display: flex; justify-content: space-between; padding: 2px 10px 6px 2px; }
  .g3 div { display: flex; flex-direction: column; justify-content: space-around; }
  .bare.t { font-size: 20px; margin-top: 6px; font-weight: bold; height: 44px; }
  .g3 .arrows { color: #ff8000; font-size: 23px; font-weight: normal; }

  /* voices */
  .voices { height: 322px; margin-top: 2px; display: flex; gap: 34px; padding: 2px 0 2px 3px; }
  .voice { width: 226px; flex: none; display: flex; flex-direction: column; }
  .voice header { height: 52px; background: #000; color: #fff; display: flex; align-items: center; justify-content: space-between; padding: 0 8px; font-size: 26px; }
  .voice strong { font-weight: bold; }
  .pad { width: 38px; height: 38px; border: 0; background: #fcfcfc; color: #000; font-size: 16px; }
  .vbody { flex: 1; display: flex; justify-content: space-between; }
  .side { display: flex; flex-direction: column; width: 52px; background: #000; }
  .side .bang { width: 52px; height: 50px; }
  .side .vs { flex: 1; width: 52px; height: auto; }
  .mid { display: flex; flex-direction: column; justify-content: space-between; align-items: center; padding: 8px 0 2px; font-size: 24px; }
  .layers { display: flex; gap: 6px; align-items: center; }
  .names { background: #000; width: 52px; }
  .names button { display: block; width: 52px; height: 52px; border: 0; background: none; color: #ff8000; font: 32px/52px "DejaVu Sans Mono", monospace; }
  .sqs { display: grid; gap: 6px; }
  .sqs button { width: 46px; height: 46px; background: #000; border: 0; }

  /* effects */
  .fx { height: 340px; padding: 4px 2px 0 4px; display: flex; flex-direction: column; }
  .fxtop { display: flex; justify-content: space-between; height: 242px; }
  .strips { display: flex; gap: 2px; height: 234px; padding-top: 2px; }
  .strips .vs { width: 32px; }
  .strips .vs:last-child { width: 42px; margin-left: 6px; }
  .cuts { width: 152px; display: grid; grid-auto-rows: 40px; }
  .cuts label, .vb { display: grid; align-items: center; }
  .cuts label > :global(*), .vb > :global(*) { grid-area: 1 / 1; }
  .cuts span, .vb span { z-index: 1; padding-left: 12px; }
  .fx .cuts span, .fx .vb span { padding-bottom: 8px; }
  .c1 { --tr: #000; color: #fff; }
  .c2 { --tr: #000; color: #ff8000; }
  .c3, .c6 { --tr: #ff8000; color: #fff; font-size: 16px; font-weight: bold; }
  .c4, .c5 { --tr: #dcdcdc; }
  .c4.light { color: #fff; }
  .c5 { color: #f08010; }
  .cuts .c3 span, .cuts .c5 span, .cuts .c6 span { padding-left: 5px; }
  .cuts .c3 span { padding-left: 10px; }
  .verb { display: grid; grid-template-columns: 1fr 1fr; grid-auto-rows: 42px; gap: 2px 6px; }

  /* scope */
  .wave { margin: 0 0 0 6px; border: 4px solid #000; border-right-width: 6px; border-bottom: 0; background: #000; height: 181px; display: flex; flex-direction: column; }
  .right .wave { margin-left: 0; }
  .scope { display: grid; height: 156px; background: #fcfcfc; }
  .scope svg { grid-area: 1 / 1; width: 100%; height: 156px; }
  .marks { grid-area: 1 / 1; align-self: end; display: flex; font-size: 13px; line-height: 14px; padding: 0 0 1px 32px; }
  .marks span { width: 88px; text-align: center; }
  .wave > .hs { --tr: #000; height: 21px; width: 100%; border-width: 4px 0 0; }

  /* analyse */
  .analyse { background: #000; margin-top: 2px; padding: 0 6px 9px 8px; display: flex; flex-direction: column; height: 1051px; font-size: 23px; }
  .analyse h2 { color: #fff; font: bold 20px/26px "DejaVu Sans Mono", monospace; text-align: center; padding-top: 26px; }
  .an { background: #fcfcfc; flex: 1; padding: 13px 20px 0 4px; display: flex; flex-direction: column; gap: 6px; margin-bottom: 8px; }
  .an.b { margin-bottom: 0; padding-top: 10px; }
  .an label { display: flex; align-items: center; justify-content: flex-end; gap: 8px; line-height: 28px; }
  .an1 { display: flex; justify-content: space-between; align-items: flex-start; }
  .an1 > span { display: flex; }
  .a .an1 .gb { margin-top: 10px; }
  .b .an1 .gb { margin-top: 22px; }
  .an .tog { background: var(--tick), #dcdcdc; }
  .ser { width: 45px; height: 45px; font: 26px/30px "DejaVu Serif", serif; }
  .gb { width: 46px; height: 46px; }
  .an2 { display: flex; justify-content: flex-end; margin: 36px 0 -4px; }
  .five { display: flex; margin: 11px 0 -4px; }
  .an p { text-align: center; padding-left: 12px; line-height: 28px; }
  .an p.send { padding-left: 40px; }
  .bck { display: flex; gap: 6px; align-items: center; padding-left: 48px; margin-top: -4px; }
  .an.b .bck { margin-top: -8px; }
  .an .blk { background: #000; }

  /* output */
  aside { width: 198px; margin-top: 20px; height: 262px; background: #7f7f7f; padding: 12px 0 0 20px; }
  aside h2 { color: #fff; font: 20px/24px "DejaVu Sans Mono", monospace; padding-left: 16px; }
  aside label { display: flex; align-items: center; }
  .size { margin-top: 18px; gap: 3px; padding-left: 2px; }
  .fs { font-size: 32px; margin-top: 4px; line-height: 34px; }
  .fs label { gap: 12px; height: 37px; padding-bottom: 2px; }
  .fs input { appearance: none; width: 38px; height: 39px; background: #dcdcdc; border: 2px solid #000; }
  .fs input:checked { background: linear-gradient(#2e0050, #2e0050) center / 22px 22px no-repeat, #dcdcdc; }
  .destroy { font: 23px/30px "DejaVu Sans Mono", monospace; color: #fff; gap: 15px; margin-top: 1px; }
  .destroy .bang { --bb: #dcdcdc; width: 36px; height: 36px; }

  /* sequencers */
  .bottom { display: flex; gap: 16px; padding: 36px 190px 40px 2px; align-items: flex-start; }
  .seqs { flex: 1; display: flex; flex-direction: column; gap: 12px; min-width: 0; }
  .seq { background: #000; height: 402px; display: flex; padding: 20px 10px 0 14px; font-size: 32px; }
  .seq.sB { padding-left: 8px; }
  .ctl { width: 742px; height: 368px; background: #fcfcfc; flex: none; display: flex; flex-direction: column; }
  .sB .ctl { width: 752px; }
  .ctop { display: flex; height: 202px; }
  .cl { width: 316px; padding-left: 12px; display: flex; flex-direction: column; flex: none; }
  .sB .cl { width: 322px; padding-left: 16px; }
  .lenrow { display: flex; justify-content: space-between; align-items: flex-end; padding: 8px 0 0 8px; }
  .sB .lenrow { padding-left: 0; }
  .lenrow label { display: flex; flex-direction: column; line-height: 40px; height: 108px; }
  .tag { width: 62px; height: 62px; border: 0; background: #000; color: #ff8000; font: 28px/40px "Liberation Sans", sans-serif; }
  .ts { display: flex; height: 34px; font-size: 30px; }
  .ts label { flex: 1; display: grid; align-items: center; --tr: #dcebeb; }
  .ts label > :global(*) { grid-area: 1 / 1; }
  .ts span { z-index: 1; padding: 4px 0 0 16px; line-height: 30px; }
  .heads { display: grid; grid-template-columns: 68px 43px 106px 70px; align-items: center; flex: 1; }
  .star { font-size: 30px; background: #d0e0e0; line-height: 50px; width: 42px; margin-left: -2px; align-self: stretch; }
  .it { width: 40px; height: 42px; font-size: 16px; }
  .cr { flex: 1; min-width: 0; padding-left: 18px; display: flex; flex-direction: column; justify-content: space-between; }
  .sB .cr { padding-left: 22px; }
  .acts { display: flex; justify-content: flex-end; gap: 2px; padding: 12px 26px 0 0; height: 106px; }
  .letter { width: 62px; height: 62px; border: 2px solid #000; background: var(--tick), #ff8000; font-size: 58px; line-height: 56px; }
  .bang.next { width: 62px; height: 62px; font-size: 16px; }
  .nav { display: flex; flex-direction: column; align-items: flex-end; gap: 10px; padding: 8px 0 0 10px; font-size: 20px; }
  .nav > span { display: flex; gap: 4px; }
  .nz, .nx { width: 32px; height: 32px; }
  .nz { font-weight: bold; font-size: 30px; line-height: 28px; }
  .bang.nb { font-size: 16px; }
  .stp { background: #f8ff00; display: flex; gap: 10px; align-items: center; padding: 0 12px 0 2px; margin: -4px 20px 0 0; height: 74px; }
  .stp .bang { --bb: #f00; width: 52px; height: 52px; font-size: 20px; }
  .stp label { font-size: 32px; display: flex; flex-direction: column; }
  .sl { font-size: 16px; line-height: 18px; }
  .cg { display: grid; grid-template-columns: 72px 92px 128px 1fr; line-height: 40px; justify-items: start; }
  .yb { display: flex; height: 60px; }
  .yb.full { background: #f8ff00; }
  .cline { display: grid; grid-template-columns: 66px 40px 104px 66px 104px 66px 150px 90px; gap: 3px; height: 42px; padding-left: 12px; align-items: center; flex: none; }
  .sB .cline { grid-template-columns: 66px 40px 104px 66px 110px 66px 150px 90px; padding-left: 16px; }
  .l0 { background: #e2efef; --own: #e2efef; --gry: #dedede; }
  .l1 { background: #d3d8d9; --own: #d3d8d9; }
  .l2 { background: #b7b7b7; --own: #b7b7b7; --gry: #b7b7b7; }
  .l3 { background: #969b9b; --own: #969b9b; --gry: #969b9b; }
  .own { --bg: var(--own); }
  .gry { --bg: var(--gry); }
  .ne { width: 40px; height: 42px; font-size: 28px; }
  .rn { justify-self: end; padding-right: 6px; }
  .end { display: flex; justify-content: flex-end; }

  .steps { display: flex; gap: 6px; margin-left: 10px; width: 1372px; flex: none; }
  .sB .steps { width: 1374px; margin-left: 8px; }
  .grp { flex: 1; display: grid; grid-template-columns: repeat(4, 1fr); gap: 2px; }
  .step { display: flex; flex-direction: column; }
  .bang.sb { width: 30px; height: 30px; align-self: center; margin: 19px 6px 5px 0; }
  .sB .bang.sb { margin: 8px 4px 10px 0; }
  .sh { background: #dcdcdc; height: 84px; display: flex; flex-direction: column; align-items: center; justify-content: space-between; line-height: 34px; margin-bottom: 10px; padding-right: 6px; }
  .sB .sh { margin-bottom: 16px; padding-right: 4px; }
  .tw { width: 46px; height: 50px; display: grid; justify-items: center; align-items: start; padding-top: 2px; }
  .tw.pressed { background: linear-gradient(#000, #000) 0 100% / 100% 40px no-repeat; }
  .rx.flat { background: #f00; border-width: 2px 0 0; height: 32px; }
  .cell { width: 100%; height: 38px; }
  .r0 { margin-bottom: 22px; --bg: #fcfcfc; }
  .sB .r0 { margin-bottom: 18px; }
  .r1 { --bg: #e2f0f0; } .r2 { --bg: #d4d9da; } .r3 { --bg: #b8b8b8; } .r4 { --bg: #969b9b; }
  .r1, .r2, .r3 { margin-bottom: 2px; }
  .sB .r1, .sB .r2, .sB .r3 { margin-bottom: 4px; }
  .lit { --bg: #e8e828; }

  .presets { flex: 1; padding-left: 32px; display: flex; flex-direction: column; }
  .ptop { display: flex; justify-content: space-between; color: #f08010; font: 22px/26px "DejaVu Sans Mono", monospace; margin-top: -10px; }
  .pcols { display: flex; gap: 40px; padding-left: 8px; color: #fff; margin-top: auto; height: 321px; }
  .pcol { width: 118px; display: flex; flex-direction: column; gap: 14px; }
  .pcol h3 { font: 26px/32px "DejaVu Sans Mono", monospace; margin: 0 0 -10px; }
  .sB .pcol h3 { font-size: 23px; }
  .pcol .or { margin-bottom: 9px; }
  .pcol .or + :global(.wh) { margin-bottom: 17px; }

  /* synth */
  .synth { width: 622px; background: #b8b8b8; border-top: 2px solid #000; height: 818px; margin-top: 2px; }
  .synth h2 { color: #fff; font: 26px/32px "DejaVu Sans Mono", monospace; padding: 0 0 12px 26px; }
  .unit { display: grid; grid-template: 64px 150px 154px / 317px 237px 38px; padding-left: 20px; }
  .uc { grid-area: 1 / 1 / 3 / 2; padding-top: 20px; }
  .keys { display: flex; gap: 8px; padding: 0 0 4px 6px; }
  .keys span { display: grid; grid-auto-flow: column; }
  .keys > span { gap: 4px; }
  .key { width: 32px; height: 32px; }
  .cf { display: flex; width: 304px; height: 41px; margin-bottom: 4px; }
  .cf label { display: grid; align-items: center; flex: 1; }
  .cf label > :global(*) { grid-area: 1 / 1; }
  .cf label span { z-index: 1; padding: 8px 0 0 30px; font-size: 19px; }
  .cf > .hs { flex: 1; width: auto; }
  .alone { grid-area: 1 / 2 / 2 / 4; display: flex; align-items: center; color: #fff; font-weight: bold; }
  .alone > div { background: #000; height: 35px; width: 172px; margin-left: 6px; display: flex; align-items: center; padding-left: 4px; }
  .alone i { width: 28px; height: 28px; background: #7f7f7f; flex: none; }
  .alone b { margin-left: -38px; }
  .rg { display: grid; grid-template-columns: 32px 32px; grid-auto-rows: 32px; color: #000; }
  .rg .tog { font-size: 22px; }
  .r { background: #f00; } .g { background: #0f0; }
  .z { font-weight: bold; }
  .rg .z { font-size: 30px; line-height: 28px; }
  .tf { display: flex; justify-content: space-between; padding-left: 44px; align-items: flex-start; }
  .tf.Time { grid-area: 2 / 2; padding-top: 8px; }
  .tf.Freq { grid-area: 3 / 2; padding-top: 8px; }
  .kc { display: grid; grid-auto-rows: 31px; }
  .tn { font-size: 22px; display: flex; flex-direction: column; gap: 4px; line-height: 24px; margin-top: -6px; }
  .Freq .tn { margin-top: 2px; gap: 2px; }
  .tn label { display: flex; align-items: center; gap: 2px; }
  .osc { grid-area: 3 / 1; display: flex; gap: 10px; padding-left: 4px; align-items: flex-start; }
  .oscbox { flex: none; width: 170px; height: 142px; background: #dcdcdc; display: flex; justify-content: space-between; padding: 6px 6px 5px 4px; }
  .obs { display: flex; flex-direction: column; gap: 18px; padding-top: 12px; }
  .ob { width: 42px; height: 42px; }
  .ofad { display: flex; --tr: #b8b8b8; }
  .ofad .vs { width: 22px; }
  .ofad label { display: grid; }
  .ofad label > :global(*) { grid-area: 1 / 1; }
  .ofad label span { z-index: 1; padding: 6px 0 0 8px; }
  .ofad label .vs { width: 42px; }
  .verb4 { flex: none; width: 152px; display: grid; grid-auto-rows: 30px; padding-top: 6px; }
  .vc { grid-area: 2 / 3 / 4 / 4; background: #000; width: 36px; height: 114px; margin: 90px 0 0 2px; display: flex; flex-direction: column; }
  .vc .bare { width: 36px; height: 38px; }
</style>
